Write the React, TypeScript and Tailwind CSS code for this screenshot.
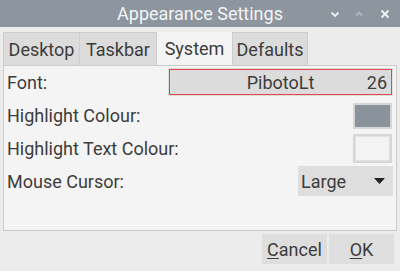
import React from "react";

export default function App() {
  return (
    <div
      className="w-[400px] h-[271px] bg-[#ececec] flex flex-col overflow-hidden text-[#3c3c3c]"
      style={{ fontFamily: "Roboto, 'Noto Sans', sans-serif" }}
    >
      {/* Title bar */}
      <div className="relative h-[27px] bg-[#8d959e] flex items-center justify-center shrink-0">
        <span className="text-[18px] text-[#f3f4f5] leading-none">Appearance Settings</span>
        <div className="absolute right-0 top-0 h-full flex items-center">
          <svg width="10" height="10" viewBox="0 0 10 10" className="mr-[14px]">
            <path d="M1.5 3.5 L5 7 L8.5 3.5" stroke="#eef0f2" strokeWidth="1.8" fill="none" />
          </svg>
          <svg width="10" height="10" viewBox="0 0 10 10" className="mr-[16px]">
            <path d="M2 6.5 L5 3.5 L8 6.5" stroke="#b7bdc3" strokeWidth="1.6" fill="none" />
          </svg>
          <svg width="10" height="10" viewBox="0 0 10 10" className="mr-[10px]">
            <path d="M1.5 1.5 L8.5 8.5 M8.5 1.5 L1.5 8.5" stroke="#f3f4f5" strokeWidth="1.8" fill="none" />
          </svg>
        </div>
      </div>

      <div className="flex flex-col px-[3px] pt-[5px]">
        {/* Tabs */}
        <div className="flex h-[33px] text-[18px]">
          <div className="w-[77px] bg-[#dcdcdc] border border-b-0 border-[#cdcdcd] flex items-center justify-center">
            Desktop
          </div>
          <div className="w-[77px] bg-[#dcdcdc] border border-b-0 border-l-0 border-[#cdcdcd] flex items-center justify-center">
            Taskbar
          </div>
          <div className="w-[75px] bg-[#f4f4f4] flex items-center justify-center">System</div>
          <div className="w-[76px] bg-[#dcdcdc] border border-b-0 border-[#cdcdcd] flex items-center justify-center">
            Defaults
          </div>
        </div>

        {/* Panel */}
        <div className="h-[166px] bg-[#f4f4f4] border border-[#cbcbcb] flex flex-col text-[18px] px-[3px] pt-[2px]">
          <div className="h-[28px] flex items-center justify-between">
            <span>Font:</span>
            <div className="w-[225px] h-[28px] bg-[#dcdcdc] p-[1px]">
              <div className="w-full h-full border border-[#e0474f] flex items-center relative">
                <span className="absolute left-0 right-0 text-center">PibotoLt</span>
                <span className="ml-auto mr-[4px] relative">26</span>
              </div>
            </div>
          </div>
          <div className="h-[33px] mt-[3px] flex items-center justify-between">
            <span>Highlight Colour:</span>
            <div className="w-[39px] h-[26px] bg-[#d6d6d6] p-[2px] mr-[1px]">
              <div className="w-full h-full bg-[#8a939c]" />
            </div>
          </div>
          <div className="h-[33px] flex items-center justify-between">
            <span>Highlight Text Colour:</span>
            <div className="w-[39px] h-[29px] bg-[#d6d6d6] p-[2px] mr-[1px]">
              <div className="w-full h-full bg-[#f3f3f3] border border-[#e2e2e2]" />
            </div>
          </div>
          <div className="h-[30px] mt-[1px] flex items-center justify-between">
            <span>Mouse Cursor:</span>
            <div className="w-[95px] h-[30px] bg-[#dedede] flex items-center pl-[3px] pr-[8px]">
              <span>Large</span>
              <svg width="11" height="7" viewBox="0 0 11 7" className="ml-auto">
                <path d="M0 0 L11 0 L5.5 6 Z" fill="#222" />
              </svg>
            </div>
          </div>
        </div>

        {/* Buttons */}
        <div className="flex justify-end gap-[2px] mt-[3px] pr-[3px] text-[18px]">
          <div className="w-[65px] h-[30px] bg-[#dedede] flex items-center justify-center">
            <span>
              <span className="underline underline-offset-2">C</span>ancel
            </span>
          </div>
          <div className="w-[65px] h-[30px] bg-[#dedede] flex items-center justify-center">
            <span>
              <span className="underline underline-offset-2">O</span>K
            </span>
          </div>
        </div>
      </div>
    </div>
  );
}
